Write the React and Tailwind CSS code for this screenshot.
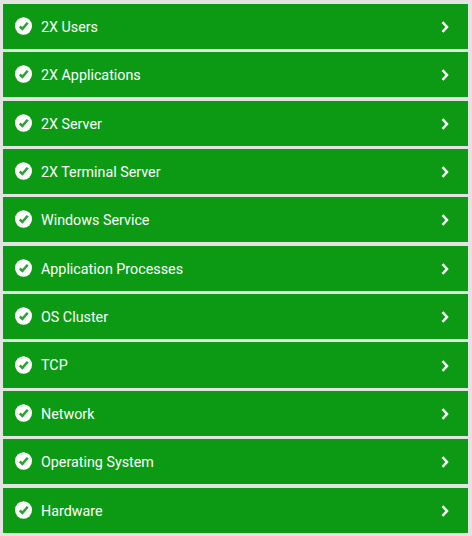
import React from 'react';

const services = [
    { name: '2X Users', row: 'mt-[4px] h-[45px]' },
    { name: '2X Applications', row: 'mt-[3px] h-[45px]' },
    { name: '2X Server', row: 'mt-[4px] h-[45px]' },
    { name: '2X Terminal Server', row: 'mt-[3px] h-[45px]' },
    { name: 'Windows Service', row: 'mt-[3px] h-[45px]' },
    { name: 'Application Processes', row: 'mt-[4px] h-[45px]' },
    { name: 'OS Cluster', row: 'mt-[3px] h-[45px]' },
    { name: 'TCP', row: 'mt-[3px] h-[46px]', label: 'mt-0', arrow: 'mt-[1px]' },
    { name: 'Network', row: 'mt-[3px] h-[45px]' },
    { name: 'Operating System', row: 'mt-[3px] h-[45px]' },
    { name: 'Hardware', row: 'mt-[4px] h-[45px]' },
];

const StatusIcon = () => (
    <svg className="w-[17px] h-[18px] mb-[1px] shrink-0" viewBox="0 0 17 18" fill="none">
        <ellipse cx="8.5" cy="9" rx="8.5" ry="8.8" fill="#fff" />
        <path d="M4.8 9.5l2.6 2.4 5.3-6.1" stroke="#2ba332" strokeWidth="2.5" />
    </svg>
);

const Chevron = ({ className }) => (
    <svg className={`w-[8px] h-[12px] shrink-0 ${className}`} viewBox="0 0 8 12" fill="none">
        <path d="M1.5 1.2L6 6l-4.5 4.8" stroke="#fff" strokeWidth="2.5" />
    </svg>
);

const App = () => {
    return (
        <div className="w-[472px] h-[536px] bg-[#e3e3e3] pl-[3px] pr-[4px] flex flex-col font-['Roboto',sans-serif]">
            {services.map(({ name, row, label = 'mt-[1px]', arrow = 'mt-0' }) => (
                <div key={name} className={`flex shrink-0 items-center bg-[#0c9a14] pl-[12px] pr-[19px] ${row}`}>
                    <StatusIcon />
                    <span className={`ml-[9px] flex-1 text-[14.3px] leading-5 text-white ${label}`}>{name}</span>
                    <Chevron className={arrow} />
                </div>
            ))}
        </div>
    );
};

export default App;
